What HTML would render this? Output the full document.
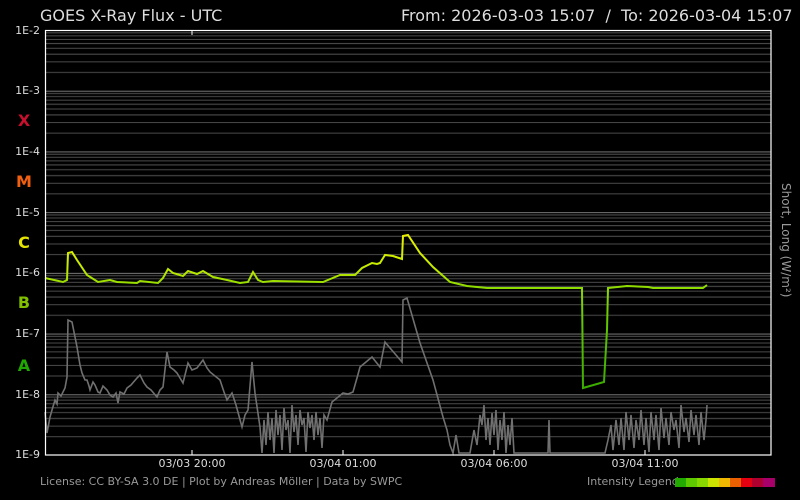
<!DOCTYPE html>
<html><head><meta charset="utf-8"><style>
html,body{margin:0;padding:0;background:#000;width:800px;height:500px;overflow:hidden}
svg{display:block}
text{font-family:"DejaVu Sans","Liberation Sans",sans-serif}
</style></head><body>
<svg width="800" height="500" viewBox="0 0 800 500" xmlns="http://www.w3.org/2000/svg">
<defs>
<pattern id="g" patternUnits="userSpaceOnUse" x="0" y="30" width="800" height="60.714">
<g stroke="#4a4a4a" stroke-width="1">
<line x1="0" x2="800" y1="42.4" y2="42.4"/><line x1="0" x2="800" y1="31.8" y2="31.8"/>
<line x1="0" x2="800" y1="24.2" y2="24.2"/><line x1="0" x2="800" y1="18.3" y2="18.3"/>
<line x1="0" x2="800" y1="13.5" y2="13.5"/><line x1="0" x2="800" y1="9.4" y2="9.4"/>
<line x1="0" x2="800" y1="5.9" y2="5.9"/><line x1="0" x2="800" y1="2.8" y2="2.8"/>
</g>
<line x1="0" x2="800" y1="0.5" y2="0.5" stroke="#777"/>
</pattern>
<linearGradient id="lg" gradientUnits="userSpaceOnUse" x1="0" y1="235" x2="0" y2="390">
<stop offset="0" stop-color="#e8f000"/><stop offset="0.2" stop-color="#c8ec00"/>
<stop offset="0.33" stop-color="#90dc00"/><stop offset="0.6" stop-color="#5cc400"/>
<stop offset="1" stop-color="#3aaa00"/></linearGradient>
</defs>
<rect x="45" y="30" width="726" height="425" fill="url(#g)"/>
<polyline fill="none" stroke="#707070" stroke-width="1.6" points="45,412 47,433 50,417 52,410 55,400 57,404 58,393 61,396 65,388 67,377 68,320 72,322 77,347 80,365 82,373 85,380 87,380 89,386 90,390 93,382 95,385 98,392 100,393 103,386 107,390 110,395 113,397 116,393 118,403 120,392 124,394 127,388 131,385 137,378 140,375 144,383 147,387 151,390 157,397 160,390 163,387 167,352 170,367 174,370 177,373 180,378 183,383 188,363 192,370 197,368 200,364 203,360 207,368 210,372 215,376 220,380 224,392 227,400 232,393 236,405 242,427 245,415 248,410 252,362 255,393 260,427 262,453 264,420 266,445 268,412 270,440 272,418 274,453 276,410 278,435 280,415 282,450 284,408 286,430 288,420 290,453 292,405 294,432 296,415 298,445 300,410 302,425 304,418 306,452 308,412 310,428 312,415 314,440 316,412 318,435 320,418 322,448 324,415 327,420 332,402 337,398 343,393 348,394 353,392 357,378 360,367 366,362 372,357 376,362 380,367 385,342 390,348 396,355 402,362 403,300 407,298 420,343 433,380 443,417 447,430 450,445 453,453 456,435 459,453 470,453 474,430 477,445 480,415 482,425 484,405 486,440 488,418 490,445 492,413 494,435 496,410 498,450 500,420 502,440 504,412 506,453 508,425 510,445 512,418 514,453 548,453 549,420 550,453 605,453 608,440 611,425 613,450 616,420 619,445 621,418 624,450 626,412 629,440 631,415 634,448 636,420 639,440 641,410 644,445 646,418 649,452 651,412 654,440 656,415 659,450 661,408 664,438 666,418 669,445 671,412 674,430 676,420 679,448 681,405 684,432 686,418 689,442 691,410 694,435 696,415 699,445 701,412 704,440 706,420 707,405"/>
<polyline fill="none" stroke="url(#lg)" stroke-width="2" points="45,278 63,282 67,280 68,253 72,252 77,260 87,275 98,282 110,280 117,282 137,283 140,281 158,283 163,278 168,269 173,273 183,276 188,271 197,274 203,271 213,277 227,280 240,283 248,282 253,272 258,280 263,282 273,281 323,282 340,275 355,275 362,268 372,263 377,264 380,263 385,255 393,256 402,259 403,236 408,235 420,253 433,267 450,282 467,286 487,288 582,288 583,388 604,382 607,330 608,288 627,286 648,287 653,288 703,288 707,285"/>
<rect x="45.5" y="30.5" width="725.5" height="424.5" fill="none" stroke="#fff" stroke-width="1.2"/>
<g stroke="#fff" stroke-width="1">
<line x1="192" x2="192" y1="30" y2="35"/><line x1="192" x2="192" y1="450" y2="455"/>
<line x1="343" x2="343" y1="450" y2="455"/><line x1="494" x2="494" y1="450" y2="455"/><line x1="645" x2="645" y1="450" y2="455"/>
</g>
<g fill="#ddd" font-size="11" text-anchor="end">
<text x="40" y="34">1E-2</text><text x="40" y="94">1E-3</text><text x="40" y="155">1E-4</text>
<text x="40" y="216">1E-5</text><text x="40" y="276">1E-6</text><text x="40" y="337">1E-7</text>
<text x="40" y="398">1E-8</text><text x="40" y="458">1E-9</text></g>
<g font-size="16" font-weight="bold" text-anchor="middle">
<text x="24" y="126" fill="#c8102e">X</text><text x="24" y="187" fill="#f06010">M</text>
<text x="24" y="248" fill="#e4e400">C</text><text x="24" y="308" fill="#80c000">B</text>
<text x="24" y="371" fill="#20a800">A</text></g>
<text x="40" y="21" fill="#ddd" font-size="16">GOES X-Ray Flux - UTC</text>
<text x="401" y="21" fill="#ddd" font-size="16" xml:space="preserve">From: 2026-03-03 15:07  /  To: 2026-03-04 15:07</text>
<g fill="#ddd" font-size="11" text-anchor="middle">
<text x="192" y="467">03/03 20:00</text><text x="343" y="467">03/04 01:00</text>
<text x="494" y="467">03/04 06:00</text><text x="645" y="467">03/04 11:00</text></g>
<text x="40" y="485" fill="#999" font-size="11">License: CC BY-SA 3.0 DE | Plot by Andreas Möller | Data by SWPC</text>
<text x="587" y="485" fill="#999" font-size="11">Intensity Legend</text>
<g><rect x="675" y="478" width="12" height="9" fill="#22aa00"/><rect x="686" y="478" width="12" height="9" fill="#5ec800"/>
<rect x="697" y="478" width="12" height="9" fill="#88d800"/><rect x="708" y="478" width="12" height="9" fill="#cce400"/>
<rect x="719" y="478" width="12" height="9" fill="#f0b800"/><rect x="730" y="478" width="12" height="9" fill="#e86000"/>
<rect x="741" y="478" width="12" height="9" fill="#e40010"/><rect x="752" y="478" width="12" height="9" fill="#b00030"/>
<rect x="763" y="478" width="12" height="9" fill="#a8006a"/></g>
<text transform="translate(782,183) rotate(90)" fill="#999" font-size="12">Short, Long (W/m²)</text>
</svg>
</body></html>
